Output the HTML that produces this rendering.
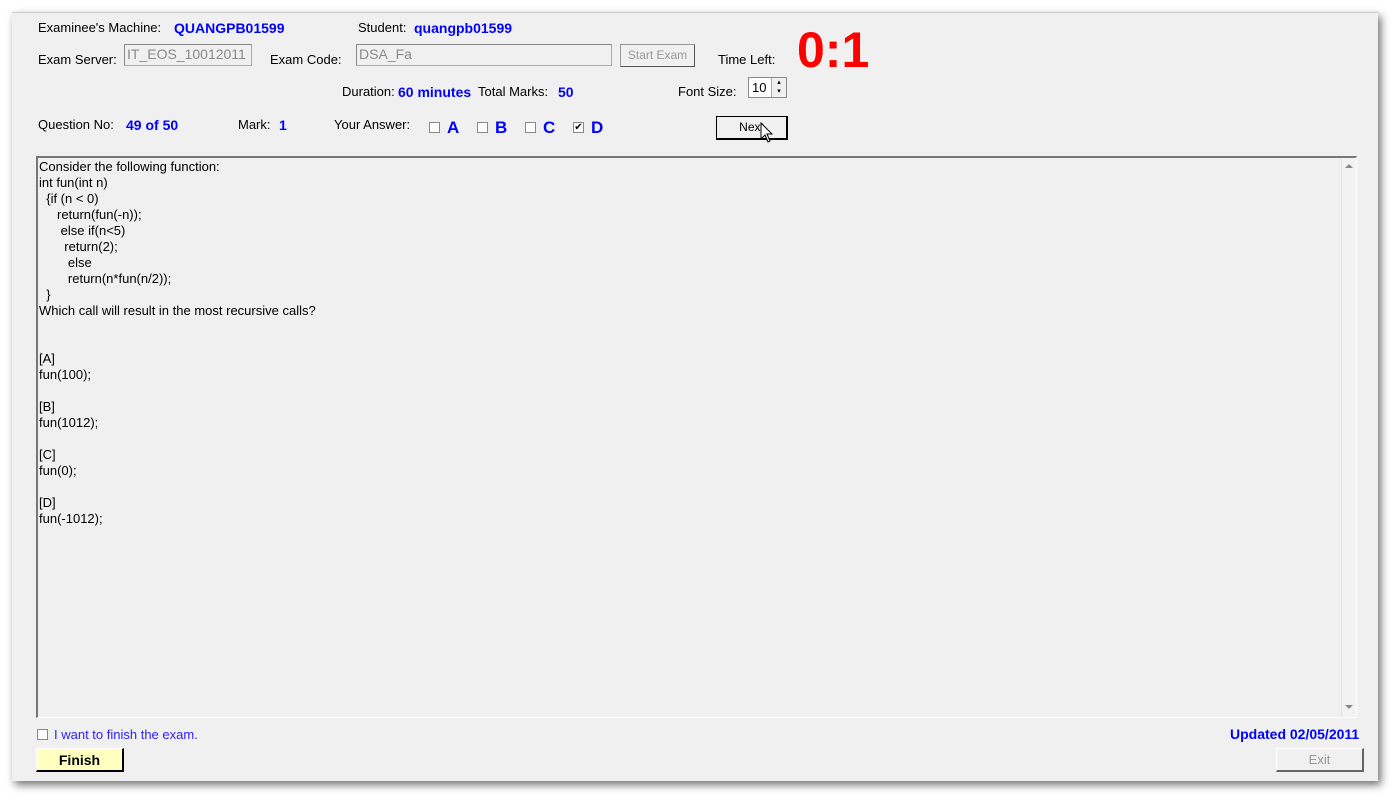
<!DOCTYPE html>
<html><head><style>
body{margin:0;width:1398px;height:800px;background:#fff;position:relative;overflow:hidden;font-family:"Liberation Sans",sans-serif;font-size:13px;color:#000}
.win{position:absolute;left:12px;top:12px;width:1366px;height:768px;background:#f0f0f0;box-shadow:3px 4px 8px rgba(0,0,0,.55);border-top:1px solid #ccc}
.a{position:absolute;white-space:nowrap}
.b{color:#0000ff;font-weight:bold;font-size:14px}
.inp{position:absolute;background:#f0f0f0;border:1px solid #aaa;border-top-color:#888;border-left-color:#888;color:#8a8a8a;font-size:14px;padding:1px 2px;box-sizing:border-box}
.btn{position:absolute;border:1px solid #999;border-right-color:#555;border-bottom-color:#555;background:#f0f0f0;text-align:center;box-sizing:border-box;font-size:12px}
.cb{position:absolute;width:11px;height:11px;border:1px solid #888;background:#fff;box-sizing:border-box}
.q{position:absolute;left:36px;top:156px;width:1321px;height:562px;border-top:2px solid #777;border-left:2px solid #777;border-bottom:1px solid #fff;border-right:1px solid #fff;box-sizing:border-box;background:#f0f0f0}
.q pre{margin:0;position:absolute;left:1px;top:1px;font-family:"Liberation Sans",sans-serif;font-size:13px;line-height:16px}
.sb{position:absolute;right:0;top:0;width:14px;height:100%;background:#f2f2f2;border-left:1px solid #e3e3e3}
</style></head><body>
<div class="win"></div>
<div class="a" style="left:38px;top:20px">Examinee's Machine:</div>
<div class="a b" style="left:174px;top:20px">QUANGPB01599</div>
<div class="a" style="left:358px;top:20px">Student:</div>
<div class="a b" style="left:414px;top:20px">quangpb01599</div>
<div class="a" style="left:38px;top:52px">Exam Server:</div>
<div class="inp" style="left:124px;top:44px;width:128px;height:22px">IT_EOS_10012011</div>
<div class="a" style="left:270px;top:52px">Exam Code:</div>
<div class="inp" style="left:356px;top:44px;width:256px;height:22px">DSA_Fa</div>
<div class="btn" style="left:620px;top:44px;width:75px;height:23px;line-height:21px;color:#999">Start Exam</div>
<div class="a" style="left:718px;top:52px">Time Left:</div>
<div class="a" style="left:797px;top:20px;color:#f00;font-weight:bold;font-size:50px;line-height:60px">0:1</div>
<div class="a" style="left:342px;top:84px">Duration:</div>
<div class="a b" style="left:398px;top:84px">60 minutes</div>
<div class="a" style="left:478px;top:84px">Total Marks:</div>
<div class="a b" style="left:558px;top:84px">50</div>
<div class="a" style="left:678px;top:84px">Font Size:</div>
<div style="position:absolute;left:748px;top:77px;width:39px;height:21px;border:1px solid #888;background:#fff;box-sizing:border-box"><span style="position:absolute;left:3px;top:2px">10</span><div style="position:absolute;right:0;top:0;width:14px;height:19px;background:#f0f0f0;border-left:1px solid #aaa;font-size:7px;text-align:center;line-height:9px">▴<br>▾</div></div>
<div class="a" style="left:38px;top:117px">Question No:</div>
<div class="a b" style="left:126px;top:117px">49 of 50</div>
<div class="a" style="left:238px;top:117px">Mark:</div>
<div class="a b" style="left:279px;top:117px">1</div>
<div class="a" style="left:334px;top:117px">Your Answer:</div>
<div class="cb" style="left:429px;top:122px"></div><div class="a b" style="left:447px;top:118px;font-size:17px">A</div>
<div class="cb" style="left:477px;top:122px"></div><div class="a b" style="left:495px;top:118px;font-size:17px">B</div>
<div class="cb" style="left:525px;top:122px"></div><div class="a b" style="left:543px;top:118px;font-size:17px">C</div>
<div class="cb" style="left:573px;top:122px;font-size:10px;line-height:9px;text-align:center">✔</div><div class="a b" style="left:591px;top:118px;font-size:17px">D</div>
<div class="btn" style="left:716px;top:116px;width:72px;height:24px;line-height:21px;border:1px solid #000;border-width:1px 2px 2px 1px;font-size:12px">Next</div>
<svg style="position:absolute;left:760px;top:122px" width="14" height="22" viewBox="0 0 14 22"><path d="M1 1 L1 17 L5 13 L8 20 L10 19 L7 12 L12 12 Z" fill="#fff" stroke="#000" stroke-width="1"/></svg>
<div class="q"><pre>Consider the following function:
int fun(int n)
  {if (n &lt; 0)
     return(fun(-n));
      else if(n&lt;5)
       return(2);
        else
        return(n*fun(n/2));
  }
Which call will result in the most recursive calls?


[A]
fun(100);

[B]
fun(1012);

[C]
fun(0);

[D]
fun(-1012);</pre>
<div class="sb"><div style="position:absolute;left:3px;top:6px;width:0;height:0;border-left:4px solid transparent;border-right:4px solid transparent;border-bottom:4px solid #888"></div><div style="position:absolute;left:3px;bottom:8px;width:0;height:0;border-left:4px solid transparent;border-right:4px solid transparent;border-top:4px solid #888"></div></div></div>
<div class="cb" style="left:37px;top:729px"></div>
<div class="a" style="left:54px;top:727px;color:#3020ff">I want to finish the exam.</div>
<div class="a b" style="left:1230px;top:726px">Updated 02/05/2011</div>
<div class="btn" style="left:36px;top:748px;width:88px;height:24px;line-height:22px;background:#ffffc0;border-color:#fff #000 #000 #fff;border-width:1px 2px 2px 1px;font-weight:bold;font-size:14px">Finish</div>
<div class="btn" style="left:1276px;top:748px;width:88px;height:24px;line-height:22px;color:#999;border-color:#fff #666 #666 #fff;border-width:1px 2px 2px 1px;font-size:13px">Exit</div>
</body></html>
